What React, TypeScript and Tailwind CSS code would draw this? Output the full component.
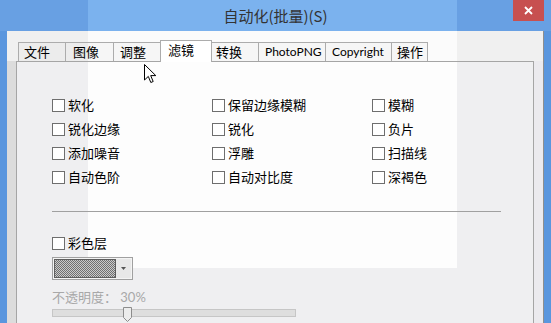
import React from "react";

// lighter patch where the white canvas of the app behind shows through the dialog
const PATCH = "bg-fixed bg-no-repeat bg-position-[88px_0px] bg-size-[369px_268px]";

const tabs = [
  { label: "文件", cls: "w-[48px] pl-[5px] text-[13px]" },
  { label: "图像", cls: "w-[49px] -ml-px pl-[7px] text-[13px]" },
  { label: "调整", cls: "w-[50px] -ml-px pl-[6px] text-[13px]" },
  { label: "滤镜", cls: "w-[52px] -ml-[3px] pl-[7px] text-[13px]", active: true },
  { label: "转换", cls: "w-[48px] -ml-px pl-[4px] text-[13px]" },
  { label: "PhotoPNG", cls: "w-[68px] -ml-px pl-[6px] text-[12px]" },
  { label: "Copyright", cls: "w-[67px] -ml-px pl-[6px] text-[12px]" },
  { label: "操作", cls: "w-[37px] -ml-px pl-[5px] text-[13px]" },
];

const filters = [
  "软化", "保留边缘模糊", "模糊",
  "锐化边缘", "锐化", "负片",
  "添加噪音", "浮雕", "扫描线",
  "自动色阶", "自动对比度", "深褐色",
];

function Box({ className = "" }: { className?: string }) {
  return <span className={`block w-[13px] h-[13px] border border-[#6e6e6e] bg-white shrink-0 ${className}`} />;
}

function Check({ label }: { label: string }) {
  return (
    <div className="h-[24px] flex items-start">
      <Box className="mt-[5px]" />
      <span className="ml-[3px] text-[13px] leading-[23px] text-black">{label}</span>
    </div>
  );
}

function Tab({ label, cls, active }: { label: string; cls: string; active?: boolean }) {
  if (active) {
    return (
      <div className={`relative z-10 h-[22px] -mb-px border-t border-x border-[#acacac] bg-white flex items-center leading-none pb-[2px] ${cls}`}>
        {label}
      </div>
    );
  }
  return (
    <div className={`h-[19px] border-t border-x border-[#acacac] bg-[#ececec] bg-[linear-gradient(#f6f6f6,#f6f6f6)] ${PATCH} flex items-center leading-none whitespace-nowrap overflow-hidden ${cls}`}>
      {label}
    </div>
  );
}

export default function App() {
  return (
    <div className="relative w-[551px] h-[323px] overflow-hidden flex flex-col bg-[#5a96de] font-['Lato','Noto_Sans_CJK_SC',sans-serif] text-black">
      {/* title bar */}
      <div className={`h-[31px] shrink-0 grid grid-cols-[1fr_auto_1fr] bg-[#68a0e3] bg-[linear-gradient(#7bb2ee,#7bb2ee)] ${PATCH}`}>
        <div />
        <div className="self-center text-[15px] leading-none text-[#333] font-['Noto_Sans_CJK_SC',sans-serif]">自动化(批量)(S)</div>
        <div className="justify-self-end self-start mr-[7px] w-[31px] h-[21px] bg-[#c75050] flex items-center justify-center">
          <svg width="9" height="9" viewBox="0 0 9 9">
            <path d="M1 1L8 8M8 1L1 8" stroke="#fff" strokeWidth="1.8" />
          </svg>
        </div>
      </div>

      <div className="flex flex-1 min-h-0">
        <div className="w-[7px] bg-[#5a96de]" />

        {/* client area */}
        <div className={`w-[537px] flex flex-col border-r border-[#8e8e8e] bg-[#f0f0f0] bg-[linear-gradient(#fbfbfb,#fbfbfb)] ${PATCH}`}>
          <div className="h-[30px] shrink-0 flex items-end pl-[11px]">
            {tabs.map((t) => (
              <Tab key={t.label} {...t} />
            ))}
          </div>

          <div className="flex flex-1">
            <div className="w-[9px] bg-[#dcdcdc]" />
            <div className={`w-[518px] border-x border-t border-[#a5a5a5] bg-[#efeff1] bg-[linear-gradient(#fdfdfd,#fdfdfd)] ${PATCH} flex flex-col`}>
              <div className="grid grid-cols-[160px_160px_160px] pl-[35px] pt-[32px]">
                {filters.map((f) => (
                  <Check key={f} label={f} />
                ))}
              </div>

              <div className="ml-[35px] mt-[21px] w-[449px] h-px bg-[#a0a0a0]" />

              <div className="pl-[35px] mt-[20px]">
                <Check label="彩色层" />
              </div>

              <div className="ml-[35px] mt-px w-[81px] h-[23px] border border-[#a0a0a0] bg-[#f4f4f4] p-px flex">
                <div className="w-[62px] border border-[#5e5e5e] bg-[repeating-conic-gradient(#707070_0_25%,#cacaca_0_50%)] bg-size-[2px_2px]" />
                <div className="w-[15px] bg-[#e8e8e8] flex items-center justify-center">
                  <svg width="5" height="3" viewBox="0 0 5 3">
                    <path d="M0 0H5L2.5 3Z" fill="#555" />
                  </svg>
                </div>
              </div>

              <div className="ml-[35px] mt-[9px] text-[13px] leading-[16px] text-[#a8a8a8]">不透明度： 30%</div>

              <div className="relative ml-[35px] mt-[4px] w-[244px] h-[8px] border border-[#c6c6c6] bg-[#dedede]">
                <svg className="absolute left-[70px] -top-[3px]" width="9" height="15" viewBox="0 0 9 15">
                  <path d="M0.5 0.5H8.5V10.5L4.5 14.5L0.5 10.5Z" fill="#ececec" stroke="#8c8c8c" />
                </svg>
              </div>
            </div>
            <div className="w-[9px] bg-[#ebeaee]" />
          </div>
        </div>

        <div className="w-[7px] bg-[#5a96de]" />
      </div>

      {/* mouse pointer */}
      <svg className="absolute left-[144px] top-[64px]" width="13" height="20" viewBox="0 0 13 20">
        <path d="M0.5 0.5V16L4.3 12.4L6.8 18.5L9.2 17.5L6.7 11.6H11.8Z" fill="#fff" stroke="#000" strokeLinejoin="round" />
      </svg>
    </div>
  );
}
